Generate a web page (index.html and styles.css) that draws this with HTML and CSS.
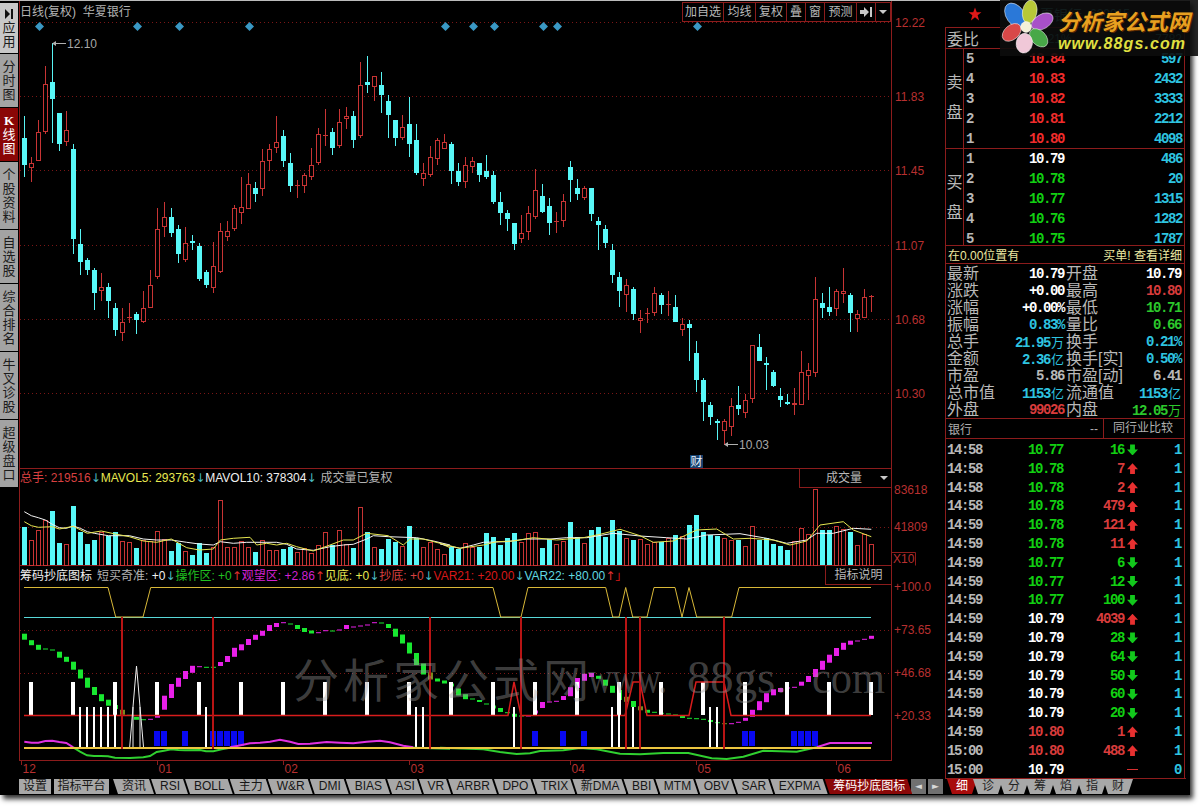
FILE: index.html
```html
<!DOCTYPE html>
<html lang="zh">
<head>
<meta charset="utf-8">
<title>分析家公式网</title>
<link rel="stylesheet" href="styles.css">
</head>
<body>
<div class="app">
  <div class="work">
    <nav class="side">
      <div class="sb sb-first"><svg class="sb-ico" viewBox="0 0 14 12"><path d="M3 1l5 5-5 5z"/><rect x="9" y="1" width="2" height="10"/></svg>应用</div>
      <div class="sb">分时图</div>
      <div class="sb sb-on"><span class="sb-k">K</span>线图</div>
      <div class="sb">个股资料</div>
      <div class="sb">自选股</div>
      <div class="sb">综合排名</div>
      <div class="sb">牛叉诊股</div>
      <div class="sb">超级盘口</div>
    </nav>
    <div class="center">
      <section class="pane pane-main">
        <svg id="mainChart" class="chart" width="927" height="468" viewBox="18 1 927 468"></svg>
        <div class="head head-main"><span class="c-gray">日线(复权)&nbsp;&nbsp;华夏银行</span></div>
        <div class="toolbar">
          <span class="tb tb-3">加自选</span><span class="tb tb-2">均线</span><span class="tb tb-2b">复权</span><span class="tb tb-1">叠</span><span class="tb tb-1">窗</span><span class="tb tb-2">预测</span>
          <span class="tb tb-1b"><svg class="tb-ico" viewBox="0 0 12 10"><path d="M0 3h4V0l5 5-5 5V7H0z"/><rect x="10" y="0" width="2" height="10"/></svg></span>
          <span class="tb tb-end"><i class="caret"></i></span>
        </div>
      </section>
      <section class="pane pane-vol">
        <svg id="volChart" class="chart" width="927" height="97" viewBox="18 469 927 97"></svg>
        <div class="head head-vol">
          <span class="c-red">总手: 219516</span><i class="ar ar-c">↓</i>
          <span class="c-yel gap">MAVOL5: 293763</span><i class="ar ar-c">↓</i>
          <span class="c-wht gap">MAVOL10: 378304</span><i class="ar ar-c">↓</i>
          <span class="c-gray gap2">成交量已复权</span>
        </div>
        <div class="panebtn panebtn-vol">成交量<i class="caret"></i></div>
      </section>
      <section class="pane pane-ind">
        <svg id="indChart" class="chart" width="927" height="212" viewBox="18 566 927 212"></svg>
        <div class="head head-ind">
          <span class="c-wht">筹码抄底图标</span>
          <span class="c-gray gap-first">短买奇准:</span>&nbsp;<span class="c-wht">+0</span><i class="ar ar-c">↓</i>
          <span class="c-grn gap0">操作区:</span>&nbsp;<span class="c-grn">+0</span><i class="ar ar-r">↑</i>
          <span class="c-mag gap0">观望区:</span>&nbsp;<span class="c-mag">+2.86</span><i class="ar ar-r">↑</i>
          <span class="c-yel gap0">见底:</span>&nbsp;<span class="c-yel">+0</span><i class="ar ar-c">↓</i>
          <span class="c-red gap0">抄底:</span>&nbsp;<span class="c-red">+0</span><i class="ar ar-c">↓</i>
          <span class="c-dred gap0">VAR21:</span>&nbsp;<span class="c-dred">+20.00</span><i class="ar ar-c">↓</i>
          <span class="c-cyn gap0">VAR22:</span>&nbsp;<span class="c-cyn">+80.00</span><i class="ar ar-r">↑</i>
          <span class="c-dred gap0">」</span>
        </div>
        <div class="panebtn panebtn-ind">指标说明</div>
      </section>
    </div>
    <aside class="right">
      <div class="panel">
        <div class="titlebar"><svg class="star" viewBox="0 0 24 24"><path d="M12 1l3 8h8l-6.500 5 2.500 9-7-5.500L5 23l2.500-9L1 9h8z"/></svg><span class="stock">华夏银行</span><span class="code">600015</span></div>
        <div class="framed">
          <div class="wei"><span class="lbl">委比</span><span class="wei-a">-51.21%</span><span class="wei-b">-7782</span></div>
          <div class="book book-sell">
            <div class="book-side"><span>卖</span><span>盘</span></div>
            <div class="book-rows">
              <div class="brow"><span class="n c-g">5</span><span class="n c-r">10.84</span><span class="n c-b">597</span></div>
              <div class="brow"><span class="n c-g">4</span><span class="n c-r">10.83</span><span class="n c-b">2432</span></div>
              <div class="brow"><span class="n c-g">3</span><span class="n c-r">10.82</span><span class="n c-b">3333</span></div>
              <div class="brow"><span class="n c-g">2</span><span class="n c-r">10.81</span><span class="n c-b">2212</span></div>
              <div class="brow"><span class="n c-g">1</span><span class="n c-r">10.80</span><span class="n c-b">4098</span></div>
            </div>
          </div>
          <div class="book book-buy">
            <div class="book-side"><span>买</span><span>盘</span></div>
            <div class="book-rows">
              <div class="brow"><span class="n c-g">1</span><span class="n c-w">10.79</span><span class="n c-b">486</span></div>
              <div class="brow"><span class="n c-g">2</span><span class="n c-e">10.78</span><span class="n c-b">20</span></div>
              <div class="brow"><span class="n c-g">3</span><span class="n c-e">10.77</span><span class="n c-b">1315</span></div>
              <div class="brow"><span class="n c-g">4</span><span class="n c-e">10.76</span><span class="n c-b">1282</span></div>
              <div class="brow"><span class="n c-g">5</span><span class="n c-e">10.75</span><span class="n c-b">1787</span></div>
            </div>
          </div>
          <div class="notice"><span>在0.00位置有</span><span>买单! 查看详细</span></div>
          <div class="quote">
            <div class="qrow"><div class="qc"><span class="lbl">最新</span><span class="n c-w">10.79</span></div><div class="qc"><span class="lbl">开盘</span><span class="n c-w">10.79</span></div></div>
            <div class="qrow"><div class="qc"><span class="lbl">涨跌</span><span class="n c-w">+0.00</span></div><div class="qc"><span class="lbl">最高</span><span class="n c-d">10.80</span></div></div>
            <div class="qrow"><div class="qc"><span class="lbl">涨幅</span><span class="n c-w">+0.00%</span></div><div class="qc"><span class="lbl">最低</span><span class="n c-e2">10.71</span></div></div>
            <div class="qrow"><div class="qc"><span class="lbl">振幅</span><span class="n c-b">0.83%</span></div><div class="qc"><span class="lbl">量比</span><span class="n c-e2">0.66</span></div></div>
            <div class="qrow"><div class="qc"><span class="lbl">总手</span><span class="n c-b">21.95<em>万</em></span></div><div class="qc"><span class="lbl">换手</span><span class="n c-b">0.21%</span></div></div>
            <div class="qrow"><div class="qc"><span class="lbl">金额</span><span class="n c-b">2.36<em>亿</em></span></div><div class="qc"><span class="lbl">换手[实]</span><span class="n c-b">0.50%</span></div></div>
            <div class="qrow"><div class="qc"><span class="lbl">市盈</span><span class="n c-g">5.86</span></div><div class="qc"><span class="lbl">市盈[动]</span><span class="n c-g">6.41</span></div></div>
            <div class="qrow"><div class="qc"><span class="lbl">总市值</span><span class="n c-b">1153<em>亿</em></span></div><div class="qc"><span class="lbl">流通值</span><span class="n c-b">1153<em>亿</em></span></div></div>
            <div class="qrow"><div class="qc"><span class="lbl">外盘</span><span class="n c-d">99026</span></div><div class="qc"><span class="lbl">内盘</span><span class="n c-e2">12.05<em>万</em></span></div></div>
          </div>
          <div class="sector"><span class="sec-name">银行</span><span class="sec-val">--</span><span class="sec-btn">同行业比较</span></div>
          <div class="ticks">
            <div class="trow"><span class="n c-g">14:58</span><span class="n c-e">10.77</span><span class="n c-e">16</span><i class="dn"></i><span class="n c-b">1</span></div>
            <div class="trow"><span class="n c-g">14:58</span><span class="n c-e">10.78</span><span class="n c-d">7</span><i class="up"></i><span class="n c-b">1</span></div>
            <div class="trow"><span class="n c-g">14:58</span><span class="n c-e">10.78</span><span class="n c-d">2</span><i class="up"></i><span class="n c-b">1</span></div>
            <div class="trow"><span class="n c-g">14:58</span><span class="n c-e">10.78</span><span class="n c-d">479</span><i class="up"></i><span class="n c-b">1</span></div>
            <div class="trow"><span class="n c-g">14:59</span><span class="n c-e">10.78</span><span class="n c-d">121</span><i class="up"></i><span class="n c-b">1</span></div>
            <div class="trow"><span class="n c-g">14:59</span><span class="n c-e">10.78</span><span class="n c-d">11</span><i class="up"></i><span class="n c-b">1</span></div>
            <div class="trow"><span class="n c-g">14:59</span><span class="n c-e">10.77</span><span class="n c-e">6</span><i class="dn"></i><span class="n c-b">1</span></div>
            <div class="trow"><span class="n c-g">14:59</span><span class="n c-e">10.77</span><span class="n c-e">12</span><i class="dn"></i><span class="n c-b">1</span></div>
            <div class="trow"><span class="n c-g">14:59</span><span class="n c-e">10.77</span><span class="n c-e">100</span><i class="dn"></i><span class="n c-b">1</span></div>
            <div class="trow"><span class="n c-g">14:59</span><span class="n c-w">10.79</span><span class="n c-d">4039</span><i class="up"></i><span class="n c-b">1</span></div>
            <div class="trow"><span class="n c-g">14:59</span><span class="n c-w">10.79</span><span class="n c-e">28</span><i class="dn"></i><span class="n c-b">1</span></div>
            <div class="trow"><span class="n c-g">14:59</span><span class="n c-w">10.79</span><span class="n c-e">64</span><i class="dn"></i><span class="n c-b">1</span></div>
            <div class="trow"><span class="n c-g">14:59</span><span class="n c-w">10.79</span><span class="n c-e">50</span><i class="dn"></i><span class="n c-b">1</span></div>
            <div class="trow"><span class="n c-g">14:59</span><span class="n c-w">10.79</span><span class="n c-e">60</span><i class="dn"></i><span class="n c-b">1</span></div>
            <div class="trow"><span class="n c-g">14:59</span><span class="n c-w">10.79</span><span class="n c-e">20</span><i class="dn"></i><span class="n c-b">1</span></div>
            <div class="trow"><span class="n c-g">14:59</span><span class="n c-d">10.80</span><span class="n c-d">1</span><i class="up"></i><span class="n c-b">1</span></div>
            <div class="trow"><span class="n c-g">15:00</span><span class="n c-d">10.80</span><span class="n c-d">488</span><i class="up"></i><span class="n c-b">1</span></div>
            <div class="trow"><span class="n c-g">15:00</span><span class="n c-w">10.79</span><span class="n"></span><i class="flat"></i><span class="n c-b">0</span></div>
          </div>
        </div>
      </div>
    </aside>
  </div>
  <div class="bottom">
    <div class="bottom-left">
      <span class="box">设置</span><span class="box box-2">指标平台</span>
      <div class="sheet">
        <span class="tab">资讯</span><span class="tab">RSI</span><span class="tab">BOLL</span><span class="tab">主力</span><span class="tab">W&amp;R</span><span class="tab">DMI</span><span class="tab">BIAS</span><span class="tab tab-t">ASI</span><span class="tab tab-t">VR</span><span class="tab tab-t">ARBR</span><span class="tab tab-t">DPO</span><span class="tab tab-t">TRIX</span><span class="tab tab-t">新DMA</span><span class="tab tab-t">BBI</span><span class="tab tab-t">MTM</span><span class="tab tab-t">OBV</span><span class="tab tab-t">SAR</span><span class="tab tab-t">EXPMA</span><span class="tab tab-on">筹码抄底图标</span>
      </div>
      <span class="scroll scroll-l">◄</span><span class="scroll">►</span>
    </div>
    <div class="bottom-right">
      <span class="mini mini-on">细</span><span class="mini">诊</span><span class="mini">分</span><span class="mini">筹</span><span class="mini">焰</span><span class="mini">指</span><span class="mini">财</span>
    </div>
  </div>
</div>
<div class="logo">
  <svg class="flower" viewBox="0 0 60 60">
    <ellipse class="p p1" cx="17" cy="17" rx="10" ry="15" transform="rotate(-35 17 17)"/>
    <ellipse class="p p2" cx="33" cy="13" rx="8" ry="13" transform="rotate(10 33 13)"/>
    <ellipse class="p p3" cx="47" cy="24" rx="8" ry="13" transform="rotate(60 47 24)"/>
    <ellipse class="p p4" cx="43" cy="42" rx="8" ry="12" transform="rotate(-45 43 42)"/>
    <ellipse class="p p5" cx="27" cy="48" rx="9" ry="11" transform="rotate(10 27 48)"/>
    <ellipse class="p p6" cx="13" cy="36" rx="8" ry="12" transform="rotate(50 13 36)"/>
    <circle class="p p7" cx="29" cy="30" r="6"/>
  </svg>
  <div class="logo-text">
    <div class="logo-cn">分析家公式网</div>
    <div class="logo-en">www.88gs.com</div>
  </div>
</div>
<script src="app.js"></script>
</body>
</html>
```
FILE: styles.css
```css
* { box-sizing: border-box; }
html, body { margin: 0; padding: 0; background: #fff; height: 100%; overflow: hidden; }
body {
  font-family: "Liberation Sans", "Noto Sans CJK SC", sans-serif;
  font-size: 12px;
  color: #c0c0c0;
}
.app {
  width: 1190px;
  height: 795px;
  background: #000;
  border-top: 1px solid #bbb;
  box-shadow: 3px 4px 5px #333;
  display: flex;
  flex-direction: column;
}
.work { display: flex; height: 777px; }

/* left vertical tabs */
.side { width: 18px; flex: none; padding-top: 2px; }
.sb {
  width: 18px;
  padding: 6px 2px 5px;
  background: #a3a3a3;
  border-bottom: 1px solid #000;
  color: #1c1c1c;
  font-size: 13px;
  line-height: 14px;
  text-align: center;
  word-break: break-all;
}
.sb-first { background: #c8c8c8; padding: 4px 2px; }
.sb-ico { display: block; width: 14px; height: 14px; fill: #111; }
.sb-on { background: #8a0606; color: #fff; }
.sb-k { display: block; font-family: "Liberation Serif", serif; font-weight: 700; }

.center { width: 927px; flex: none; display: flex; flex-direction: column; }
.pane { position: relative; }
.pane-main { height: 468px; }
.pane-vol { height: 97px; }
.pane-ind { height: 212px; }
.chart { display: block; }
.head {
  position: absolute;
  left: 2px;
  top: 0;
  height: 18px;
  display: flex;
  align-items: center;
  white-space: nowrap;
  line-height: 18px;
}
.head-main { top: 2px; }
.head-vol { top: 0; }
.head-ind { top: 1px; }
.gap { margin-left: 3px; }
.gap-first { margin-left: 5px; }
.gap0 { margin-left: 3px; }
.gap2 { margin-left: 7px; }
.c-gray { color: #b4b4b4; }
.c-red { color: #d84040; }
.c-dred { color: #d81818; }
.c-yel { color: #e8e850; }
.c-wht { color: #f0f0f0; }
.c-grn { color: #20c020; }
.c-mag { color: #d020d0; }
.c-cyn { color: #60d8e0; }
.ar { font-style: normal; font-family: "DejaVu Sans", sans-serif; display: inline-block; width: 7px; letter-spacing: -4px; font-size: 12px; }
.ar-c { color: #4ab8c0; }
.ar-r { color: #e03030; }

.toolbar {
  position: absolute;
  right: 54px;
  top: 1px;
  height: 20px;
  display: flex;
  background: #000;
  border: 1px solid #8c1c1c;
}
.tb { border-right: 1px solid #8c1c1c; color: #b8b8b8; text-align: center; line-height: 18px; display: flex; align-items: center; justify-content: center; }
.tb-3 { width: 41px; }
.tb-2 { width: 32px; }
.tb-2b { width: 31px; }
.tb-1 { width: 19px; }
.tb-1b { width: 19px; }
.tb-end { width: 14px; border-right: 0; }
.tb-ico { width: 12px; height: 10px; fill: #c8c8c8; }
.caret { display: block; width: 0; height: 0; border: 4px solid transparent; border-top: 4px solid #c8c8c8; border-bottom: 0; }

.panebtn {
  position: absolute;
  right: 54px;
  top: 0;
  height: 19px;
  background: #000;
  border-left: 1px solid #8c1c1c;
  border-bottom: 1px solid #8c1c1c;
  color: #b8b8b8;
  line-height: 18px;
  display: flex;
  align-items: center;
  white-space: nowrap;
}
.panebtn-vol { width: 92px; padding-left: 26px; gap: 18px; }
.panebtn-ind { width: 66px; justify-content: center; }

/* chart svg parts */
.frame { stroke: #8c1c1c; stroke-width: 1; fill: none; }
.grid { stroke: #7a1616; stroke-width: 1; stroke-dasharray: 1 3; }
.wick-r { stroke: #c83434; stroke-width: 1; }
.wick-c { stroke: #58f4f4; stroke-width: 1; }
.body-r { stroke: #c83434; stroke-width: 1; fill: #000; }
.body-c { fill: #58f8f8; }
.dia { fill: #3a98c4; }
.axis { fill: #b83030; font-family: "Liberation Sans", sans-serif; font-size: 12px; }
.peak { fill: #a8a8a8; font-family: "Liberation Sans", sans-serif; font-size: 12px; }
.peak-ln { stroke: #b0b0b0; stroke-width: 1; fill: none; }
.peak-hd { fill: #b0b0b0; }
.badge { fill: #16406e; }
.badge-t { fill: #e8f0f8; font-size: 12px; font-family: "Noto Sans CJK SC", sans-serif; }
.ma-w { stroke: #f4f4f4; fill: none; stroke-width: 1; }
.ma-y { stroke: #e6e650; fill: none; stroke-width: 1; }
.step-y { stroke: #d8b838; fill: none; stroke-width: 1; }
.lv-c { stroke: #58d8d8; stroke-width: 1; }
.lv-r { stroke: #d81c1c; fill: none; stroke-width: 1.500; }
.vbar { stroke: #b81414; stroke-width: 2; }
.w-bar { fill: #fff; }
.w-thin { fill: #fff; }
.w-tri { stroke: #f0f0f0; stroke-width: 1; fill: none; }
.b-bar { fill: #0808f0; }
.base-y { stroke: #ecc640; stroke-width: 2; }
.flow-m { stroke: #e030e0; stroke-width: 2; fill: none; }
.flow-g { stroke: #30d030; stroke-width: 2; fill: none; }
.t-g { fill: #18e830; }
.t-m { fill: #e820e8; }
.t-o { fill: #7a8a20; }
.wm-cn { fill: rgba(150,150,150,.42); font-family: "Noto Sans CJK SC", sans-serif; font-size: 46px; letter-spacing: 4px; }
.wm-en { fill: rgba(150,150,150,.42); font-family: "Liberation Serif", serif; font-size: 47px; }

/* right panel */
.right { width: 245px; flex: none; }
.panel { width: 240px; }
.titlebar { height: 26px; padding-left: 23px; position: relative; display: flex; align-items: center; }
.star { width: 14px; height: 14px; fill: #e01818; margin-top: -1px; }
.stock { margin-left: 44px; color: #3fb0b0; font-size: 14px; }
.code { margin-left: 8px; color: #3fb0b0; font-size: 12px; }
.framed { border: 1px solid #8c1c1c; border-bottom: 0; }
.lbl { font-size: 16px; color: #b8b8b8; white-space: nowrap; line-height: 17px; }
.n {
  font-family: "Liberation Mono", monospace;
  font-weight: 700;
  font-size: 14px;
  letter-spacing: -1.4px;
  white-space: nowrap;
}
.n em { font-style: normal; font-family: "Noto Sans CJK SC", sans-serif; font-weight: 400; font-size: 13px; letter-spacing: 0; margin-left: 1px; }
.c-g { color: #b8b8b8; }
.c-r { color: #f02c2c; }
.c-d { color: #d83c3c; }
.c-e { color: #12d012; }
.c-e2 { color: #2cc82c; }
.c-w { color: #fff; }
.c-b { color: #2ec4e0; }
.wei { height: 21px; padding: 2px 0 0 1px; border-bottom: 1px solid #8c1c1c; display: flex; align-items: center; position: relative; }
.wei-a { margin-left: 48px; color: #2e9a9a; font-size: 12px; }
.wei-b { margin-left: auto; margin-right: 2px; color: #2e9a9a; font-size: 12px; }
.book { display: flex; overflow: hidden; }
.book-sell { height: 100px; border-bottom: 1px solid #8c1c1c; }
.book-buy { height: 97px; border-bottom: 1px solid #8c1c1c; }
.book-side { width: 18px; flex: none; border-right: 1px solid #8c1c1c; display: flex; flex-direction: column; align-items: center; justify-content: center; gap: 14px; font-size: 16px; line-height: 16px; color: #b8b8b8; padding-bottom: 2px; }
.book-buy .book-side { padding-bottom: 0; padding-top: 2px; }
.book-rows { flex: 1; }
.brow { height: 20px; display: grid; grid-template-columns: 63px 36px 1fr; align-items: center; padding: 0 2px 0 2px; }
.brow .n:last-child { text-align: right; }
.notice { height: 18px; border-bottom: 1px solid #8c1c1c; display: flex; justify-content: space-between; align-items: center; padding: 0 2px 0 2px; color: #ece8a0; }
.quote { height: 155px; padding-top: 1px; border-bottom: 1px solid #8c1c1c; }
.qrow { height: 17px; display: flex; padding-left: 1px; align-items: center; }
.qc { display: flex; justify-content: space-between; align-items: center; }
.qc:first-child { width: 117px; }
.qc:last-child { width: 115px; margin-left: 2px; }
.sector { height: 20px; border-bottom: 1px solid #8c1c1c; display: flex; align-items: center; padding-left: 2px; position: relative; color: #b0b0b0; }
.sec-val { margin-left: auto; margin-right: 5px; }
.sec-btn { width: 81px; height: 19px; line-height: 19px; border-left: 1px solid #8c1c1c; padding-left: 9px; }
.ticks { height: 340px; padding-top: 1.6px; overflow: hidden; }
.trow { height: 18.8px; display: grid; grid-template-columns: 36px 80px 61px 14px 1fr; align-items: center; padding: 0 3px 0 1px; }
.trow .n:nth-child(2), .trow .n:nth-child(3), .trow .n:last-child { text-align: right; }
.up, .dn, .flat { display: block; width: 11px; height: 11px; margin-left: 3px; }
.up { background: #e83030; clip-path: polygon(50% 0, 100% 55%, 72% 55%, 72% 100%, 28% 100%, 28% 55%, 0 55%); }
.dn { background: #12c81c; clip-path: polygon(50% 100%, 100% 45%, 72% 45%, 72% 0, 28% 0, 28% 45%, 0 45%); }
.flat { background: linear-gradient(#0000 5px, #d83030 5px, #d83030 6px, #0000 6px); }

/* bottom */
.bottom { height: 17px; display: flex; }
.bottom-left { width: 945px; flex: none; display: flex; padding: 1px 2px 1px 19px; }
.box { flex: none; width: 32px; height: 15px; background: #a8a8a8; color: #161616; text-align: center; line-height: 15px; white-space: nowrap; }
.box-2 { width: 55px; margin-left: 3px; }
.sheet { display: flex; flex: none; margin-left: 4px; }
.tab {
  flex: none;
  height: 15px;
  padding: 0 8px 0 9px;
  margin-right: -3px;
  background: #a8a8a8;
  color: #161616;
  line-height: 15px;
  white-space: nowrap;
  clip-path: polygon(0 0, calc(100% - 5px) 0, 100% 100%, 5px 100%);
}
.tab-t { padding: 0 7px 0 8.500px; }
.tab-on { background: #8a0808; color: #fff; padding: 0 7px 0 8.500px; }
.scroll { flex: none; width: 15px; height: 15px; background: #707070; color: #d8d8d8; font-size: 9px; line-height: 15px; text-align: center; margin-left: 2px; font-family: "DejaVu Sans", sans-serif; }
.scroll-l { margin-left: auto; }
.bottom-right { display: flex; padding: 0 0 0 2px; border-top: 1px solid #8c1c1c; width: 241px; }
.mini {
  width: 30px;
  height: 15px;
  margin-right: -4px;
  background: #a8a8a8;
  color: #222;
  text-align: center;
  line-height: 15px;
  clip-path: polygon(0 0, 100% 0, calc(100% - 5px) 100%, 5px 100%);
}
.mini-on { background: #a80c0c; color: #fff; }

/* logo overlay */
.logo {
  position: absolute;
  left: 1000px;
  top: 0;
  width: 198px;
  height: 56px;
  background: rgba(12,12,12,.9);
  display: flex;
  gap: 4px;
}
.flower { width: 54px; height: 54px; flex: none; }
.p { stroke: rgba(255,255,255,.55); stroke-width: 1; }
.p1 { fill: #2a78d8; }
.p2 { fill: #b8c838; }
.p3 { fill: #a850c8; }
.p4 { fill: #48a848; }
.p5 { fill: #f0c8d8; }
.p6 { fill: #d84848; }
.p7 { fill: #f4f0d8; }
.logo-text { padding-top: 7px; }
.logo-cn { font-size: 22px; line-height: 26px; font-weight: 700; font-style: italic; color: #e8a020; font-family: "Noto Sans CJK SC", sans-serif; text-shadow: 1px 1px 0 #5a2a00; white-space: nowrap; }
.logo-en { margin-top: 3px; font-size: 16px; line-height: 15px; font-weight: 700; font-style: italic; color: #e0e040; font-family: "Liberation Sans", sans-serif; letter-spacing: 1.1px; white-space: nowrap; }
```
FILE: app.js
```js
// Chart data is in screen pixels, read off the reference picture.
var X = function (i) { return 24.5 + 7 * i; };

// high, body top, body bottom, low, 0 red / 1 cyan
var K = [[116,138,165,177,1],[157,163,168,182,0],[120,132,161,161,0],[66,84,132,134,0],[43,82,99,143,1],[113,113,144,151,1],[111,130,142,146,0],[144,149,239,254,1],[229,244,262,275,1],[258,260,270,275,1],
[268,270,293,310,1],[273,287,291,301,0],[283,287,301,318,1],[303,308,330,336,1],[308,322,333,341,0],[303,317,317,323,0],[312,314,320,334,1],[291,308,322,323,0],[270,285,308,308,0],[208,229,277,279,0],
[202,217,227,237,0],[208,217,233,237,1],[225,229,254,263,1],[227,243,260,262,0],[235,241,242,250,1],[243,246,279,281,1],[270,272,285,288,1],[242,266,288,293,0],[223,231,272,273,0],[221,231,237,241,0],
[205,208,229,231,0],[177,207,213,224,0],[173,184,209,209,0],[182,188,194,202,1],[149,161,189,196,0],[144,149,161,171,0],[116,142,148,153,0],[130,136,161,167,1],[153,163,186,192,1],[180,185,185,198,0],
[173,175,186,193,0],[148,165,177,180,0],[128,134,163,165,0],[109,135,135,146,0],[128,132,148,155,1],[109,122,146,148,0],[107,116,119,129,0],[111,116,140,148,1],[62,85,136,138,0],[56,82,85,93,1],
[76,76,87,101,0],[72,85,95,113,1],[95,101,115,138,1],[120,120,138,146,1],[115,127,138,140,0],[97,124,144,157,1],[124,140,173,175,1],[163,173,179,186,0],[146,157,175,177,0],[138,140,159,165,0],
[134,142,149,149,0],[142,144,171,184,1],[163,171,182,186,1],[157,165,182,188,0],[157,161,167,173,0],[163,163,175,182,1],[155,171,177,179,1],[171,175,202,204,1],[192,202,213,225,1],[210,213,219,231,1],
[223,223,244,250,1],[215,233,239,243,0],[206,213,232,240,0],[169,190,217,219,0],[184,196,212,213,1],[198,206,223,235,1],[212,221,221,233,0],[194,201,221,227,0],[161,167,180,202,1],[179,188,194,200,1],
[186,188,198,200,0],[188,188,214,221,1],[217,221,225,250,1],[225,229,243,248,1],[244,250,275,283,1],[272,277,291,307,1],[279,285,295,312,0],[287,289,314,320,1],[310,318,321,333,0],[308,313,313,323,0],
[287,293,313,316,0],[293,295,305,314,1],[291,304,304,316,0],[295,307,322,322,1],[318,324,330,336,0],[320,324,328,361,1],[341,353,380,392,1],[378,380,402,421,1],[402,405,417,425,1],[419,421,423,440,1],
[419,421,431,445,0],[398,406,427,436,0],[386,405,409,415,1],[394,400,413,418,0],[345,345,399,403,0],[334,347,361,361,1],[357,363,365,390,1],[370,372,386,387,1],[388,396,400,407,1],[394,402,403,405,1],
[388,403,405,415,0],[351,372,405,405,0],[363,370,376,400,0],[277,299,373,377,0],[293,303,308,318,1],[287,307,312,316,1],[289,291,309,316,0],[268,291,294,303,0],[293,295,313,332,1],[310,314,319,332,0],
[289,297,318,318,0],[295,296,296,312,0]];

// top of bar, 0 red / 1 cyan
var V = [[527,1],[540,0],[530,0],[520,0],[511,1],[543,1],[544,0],[506,1],[532,1],[544,1],[540,1],[532,0],[536,1],[532,1],[541,0],[542,0],[548,1],[540,0],[541,0],[531,0],
[539,0],[551,1],[543,1],[551,0],[555,1],[543,1],[553,1],[547,0],[500,0],[547,0],[547,0],[541,0],[547,0],[552,1],[540,0],[550,0],[550,0],[549,1],[547,1],[552,0],
[548,0],[553,0],[545,0],[532,0],[545,1],[530,0],[544,0],[548,1],[507,0],[532,1],[547,0],[549,1],[539,1],[542,1],[546,0],[526,1],[538,1],[547,0],[542,0],[549,0],
[554,0],[547,1],[549,1],[543,0],[547,0],[547,1],[533,1],[537,1],[545,1],[538,1],[533,1],[542,0],[533,0],[532,0],[548,1],[539,1],[544,0],[541,0],[522,1],[537,1],
[543,0],[530,1],[527,1],[537,1],[520,1],[531,1],[538,0],[540,1],[539,0],[544,0],[542,0],[542,1],[538,0],[535,1],[536,0],[525,1],[515,1],[532,1],[535,1],[536,1],
[538,0],[540,0],[540,1],[546,0],[526,0],[540,1],[538,1],[544,1],[546,1],[550,1],[541,0],[528,0],[534,0],[489,0],[530,1],[530,1],[526,0],[529,0],[532,1],[545,0],[534,0],[544,0]];

// centre y, height, colour: g green, m magenta, o olive
var T = [[636.7,6,'g'],[642.7,5,'g'],[647.3,5,'g'],[649,1,'g'],[650,1,'g'],[654.7,6,'g'],[659.3,5,'g'],[665.7,8,'g'],[674,9,'g'],[682.7,10,'g'],[691,8,'g'],[697.7,7,'g'],[702.7,6,'g'],[707,4,'g'],[712.3,5,'o'],[715.3,1,'g'],[718.3,3,'g'],[719.7,1,'g'],[719.3,1,'m'],[716.7,2,'m'],
[702.7,14,'m'],[691,14,'m'],[682.3,9,'m'],[675,8,'m'],[669.3,7,'m'],[666.7,1,'m'],[667.3,1,'g'],[667.3,1,'g'],[664,4,'m'],[659,6,'m'],[652.3,9,'m'],[647.3,6,'m'],[642,6,'m'],[637.3,5,'m'],[633.3,5,'m'],[628,6,'m'],[625,4,'m'],[622.7,1,'m'],[624,1,'g'],[627,4,'g'],
[630,4,'g'],[632,3,'g'],[632.7,1,'m'],[630.7,1,'m'],[631,1,'g'],[630,1,'m'],[627,4,'m'],[627,1,'m'],[626,1,'m'],[625,1,'m'],[622.7,1,'m'],[623,1,'g'],[626,4,'g'],[632.7,8,'g'],[639,9,'g'],[648,11,'g'],[659,12,'g'],[669,11,'g'],[676,7,'o'],[680,3,'g'],
[682,3,'g'],[685,3,'g'],[692,7,'g'],[696.7,5,'g'],[699,1,'g'],[701,2,'g'],[704,1,'g'],[707,3,'g'],[710,4,'g'],[712.7,1,'g'],[715.3,3,'g'],[716,1,'g'],[716,1,'m'],[712,3,'m'],[705,6,'m'],[702,1,'m'],[701.3,1,'m'],[698,4,'m'],[691.7,9,'m'],[683,10,'m'],
[677.3,7,'m'],[675,4,'m'],[677.3,3,'g'],[682.7,6,'g'],[689.3,7,'g'],[695,10,'g'],[699.3,5,'o'],[704,6,'g'],[708.3,4,'o'],[711.3,3,'g'],[712.3,1,'g'],[713.3,1,'g'],[714,1,'g'],[715,1,'g'],[717,2,'g'],[718.3,1,'g'],[718.7,1,'g'],[719.3,1,'g'],[721,2,'g'],[722.7,1,'g'],
[723.7,1,'o'],[723.7,1,'m'],[722.3,1,'m'],[719.3,3,'m'],[713.3,7,'m'],[705.7,9,'m'],[697.7,9,'m'],[692.3,6,'m'],[690,4,'m'],[688,1,'m'],[687.3,1,'m'],[683.7,4,'m'],[679,6,'m'],[673,8,'m'],[665.3,9,'m'],[658.7,8,'m'],[652,8,'m'],[646.3,7,'m'],[642.7,4,'m'],[641,1,'m'],
[639.3,1,'m'],[637.3,3,'m']];

// point lists as read off 3x crops: [x,y,...] with an origin added
function pts(list, ox, oy) {
  var out = [];
  for (var i = 0; i < list.length; i += 2) {
    out.push((list[i] / 3 + ox).toFixed(1) + ',' + (list[i + 1] / 3 + oy).toFixed(1));
  }
  return out.join(' ');
}
function line(c, x1, y1, x2, y2) { return '<line class="' + c + '" x1="' + x1 + '" y1="' + y1 + '" x2="' + x2 + '" y2="' + y2 + '"/>'; }
function rect(c, x, y, w, h) { return '<rect class="' + c + '" x="' + x + '" y="' + y + '" width="' + w + '" height="' + h + '"/>'; }
function text(c, x, y, s, extra) { return '<text class="' + c + '" x="' + x + '" y="' + y + '"' + (extra || '') + '>' + s + '</text>'; }
function poly(c, p) { return '<polyline class="' + c + '" points="' + p + '"/>'; }

function frame(y1, y2) {
  return line('frame', 19.5, y1, 19.5, y2) + line('frame', 891.5, y1, 891.5, y2);
}

// ---------- price chart
(function () {
  var s = frame(0, 469);
  s += line('frame', 19, 468.5, 892, 468.5);
  [22.5, 96.5, 170.5, 245.5, 319.5, 393.5].forEach(function (y) { s += line('grid', 20, y, 891, y); });
  [[12.22, 22], [11.83, 96], [11.45, 170], [11.07, 245], [10.68, 319], [10.30, 393]].forEach(function (a) {
    s += text('axis', 895, a[1] + 5, a[0].toFixed(2));
  });
  [39.5, 137.5, 179.5, 249.5, 445.5, 473.5, 494.5, 543.5, 557.5, 697.5].forEach(function (x) {
    s += '<path class="dia" d="M' + x + ' 22l4.500 4.500-4.500 4.500-4.500-4.500z"/>';
  });
  K.forEach(function (k, i) {
    var x = X(i), red = !k[4];
    s += line(red ? 'wick-r' : 'wick-c', x, k[0], x, k[3]);
    if (red) {
      if (k[2] - k[1] < 2) { s += rect('body-r', x - 2, k[1] + 0.5, 4, 0.01); }
      else { s += rect('body-r', x - 2, k[1] + 0.5, 4, k[2] - k[1] - 1); }
    } else {
      s += rect('body-c', x - 2.5, k[1], 5, Math.max(k[2] - k[1], 2));
    }
  });
  s += '<path class="peak-ln" d="M53 43.500h13M725 444.500h13"/>';
  s += '<path class="peak-hd" d="M52 43.500l4-2.500v5zM724 444.500l4-2.500v5z"/>';
  s += text('peak', 67, 48, '12.10');
  s += text('peak', 739, 449, '10.03');
  s += rect('badge', 690, 455, 13, 13);
  s += text('badge-t', 690.5, 466, '财');
  document.getElementById('mainChart').innerHTML = s;
})();

// ---------- volume chart
(function () {
  var s = frame(469, 566);
  s += line('frame', 19, 565.5, 892, 565.5);
  s += line('grid', 20, 527.5, 891, 527.5);
  s += text('axis', 894, 494, '83618') + text('axis', 894, 531, '41809');
  s += '<path class="frame" d="M892 552.500h23.500v13"/>';
  s += text('axis', 893, 563, 'X10');
  V.forEach(function (v, i) {
    var x = X(i);
    if (v[1]) { s += rect('body-c', x - 2.5, v[0], 5, 565 - v[0]); }
    else { s += rect('body-r', x - 2, v[0] + 0.5, 4, 565 - v[0]); }
  });
  var ox = 0, oy = 465;
  s += poly('ma-w', pts([73,140,94,152,115,158,136,165,157,178,178,188,199,190,220,183,241,190,262,200,283,205,325,212,346,212,388,212,430,222,470,225,514,225,560,232,598,237,640,240,661,230,700,235,740,232,780,232,830,232,860,238,890,252,940,256,990,245,1030,240,1060,238,1100,222,1120,212,1165,215,1250,218,1300,228,1350,240], ox, oy));
  s += poly('ma-y', pts([73,170,94,182,115,187,157,185,178,192,220,184,262,205,304,198,346,207,388,215,430,228,470,232,514,222,560,248,598,255,640,252,661,225,700,220,750,217,770,240,800,235,830,240,860,235,890,245,940,258,990,240,1030,225,1060,225,1100,205,1165,212,1210,240,1230,222,1270,222,1320,235,1350,248], ox, oy));
  s += poly('ma-w', pts([0,237,60,250,100,240,130,232,200,230,260,222,330,222,380,218,440,218,520,205,600,213,680,218,740,222,800,210,900,206,980,220,1040,235,1100,225,1130,205,1180,205,1240,190,1294,193], 440, oy));
  s += poly('ma-y', pts([0,235,60,250,130,240,170,230,220,228,280,218,350,225,430,218,480,208,540,193,600,212,640,232,700,228,770,195,830,192,880,222,930,220,1000,225,1050,240,1100,228,1140,180,1210,170,1240,195,1294,215], 440, oy));
  document.getElementById('volChart').innerHTML = s;
})();

// ---------- indicator chart
(function () {
  var s = frame(566, 761);
  s += line('frame', 19, 760.5, 892, 760.5);
  [[100.0, 587, '+100.0'], [0, 630, '+73.65'], [0, 673, '+46.68'], [0, 716, '+20.33']].forEach(function (a) {
    s += text('axis', 894, a[1] + 4, a[2]);
  });
  s += line('grid', 20, 630.5, 891, 630.5) + line('grid', 20, 673.5, 891, 673.5);
  // cyan level and the step line above it
  s += line('lv-c', 24, 617.5, 871, 617.5);
  s += poly('step-y', '24,587.500 108,587.500 115.700,617 143,617 150.700,587.500 493,587.500 500.700,617 521,617 528,587.500 605.700,587.500 612.700,617 619,617 625.700,587.500 632.700,617 647,617 654,587.500 675,587.500 682,617 689,587.500 696.700,617 731.700,617 739,587.500 871,587.500');
  // trend squares
  T.forEach(function (t, i) { s += rect('t-' + t[2], X(i) - 2.5, t[0] - t[1] / 2, 5, t[1]); });
  // white tall bars
  for (var k = 0; k <= 20; k++) { s += rect('w-bar', 29 + 42 * k, 682, 4, 33); }
  // red level line with humps
  s += poly('lv-r', '24,715.500 508,715.500 514,682 521,715.500 625,715.500 633,682 640,682 647,715.500 689,715.500 696,682 724,682 731,715.500 871,715.500');
  // white thin bars
  [80, 87, 94, 101, 108, 115, 206, 416, 423, 514, 612, 619, 633, 710, 717].forEach(function (x) { s += rect('w-thin', x - 1, 707, 2, 42); });
  s += '<path class="w-tri" d="M129.700 747L133 707 135 683 136.500 666 138 683 140 707 143.500 747M133 707V747M140 707V747"/>';
  // blue bars
  [157, 164, 185, 213, 220, 227, 234, 241, 535, 563, 584, 745, 752, 794, 801, 808, 815].forEach(function (x) { s += rect('b-bar', x - 3, 731, 6, 15); });
  // money flow line
  s += poly('flow-m', pts([73,335,95,338,115,338,136,333,157,332,178,336,199,339,220,352], 0, 630));
  s += poly('flow-g', pts([220,352,240,365,261,376,282,378,303,378,324,379,345,383,390,384,430,382,450,378,470,366,492,362,514,358,535,360,555,361,600,360,618,364,640,364,665,358,690,353], 0, 630));
  s += poly('flow-m', pts([690,352,715,347,750,340,780,338,810,335,840,329,870,335,895,342,930,341,980,336,1020,338,1060,340,1100,335,1140,332,1170,337,1210,347,1240,352], 0, 630));
  s += poly('flow-g', pts([1240,353,1350,356], 0, 630));
  s += poly('flow-g', pts([0,353,130,358,180,366,230,372,270,370,300,363,370,361,420,354,470,358,540,371,600,373,670,369,745,369,815,385,860,387,910,380,970,362,1070,365,1130,352], 440, 630));
  s += poly('flow-m', pts([1130,352,1170,339,1296,339], 440, 630));
  s += line('base-y', 24, 748, 871, 748);
  // red signal verticals
  [122, 213, 430, 521, 626, 640, 724].forEach(function (x) { s += line('vbar', x, 617, x, 749); });
  // watermark
  s += text('wm-cn', 293, 697, '分析家公式网');
  s += text('wm-en', 588, 693, 'www.', ' textLength="79" lengthAdjust="spacingAndGlyphs"');
  s += text('wm-en', 687, 693, '88gs.', ' textLength="100" lengthAdjust="spacingAndGlyphs"');
  s += text('wm-en', 812, 693, 'com', ' textLength="73" lengthAdjust="spacingAndGlyphs"');
  // month axis
  [[21, '12'], [157, '01'], [283, '02'], [409, '03'], [570, '04'], [696, '05'], [836, '06']].forEach(function (m) {
    s += line('frame', m[0] + 0.5, 761, m[0] + 0.5, 765);
    s += text('axis', m[0] + 1.5, 773, m[1]);
  });
  document.getElementById('indChart').innerHTML = s;
})();
```
